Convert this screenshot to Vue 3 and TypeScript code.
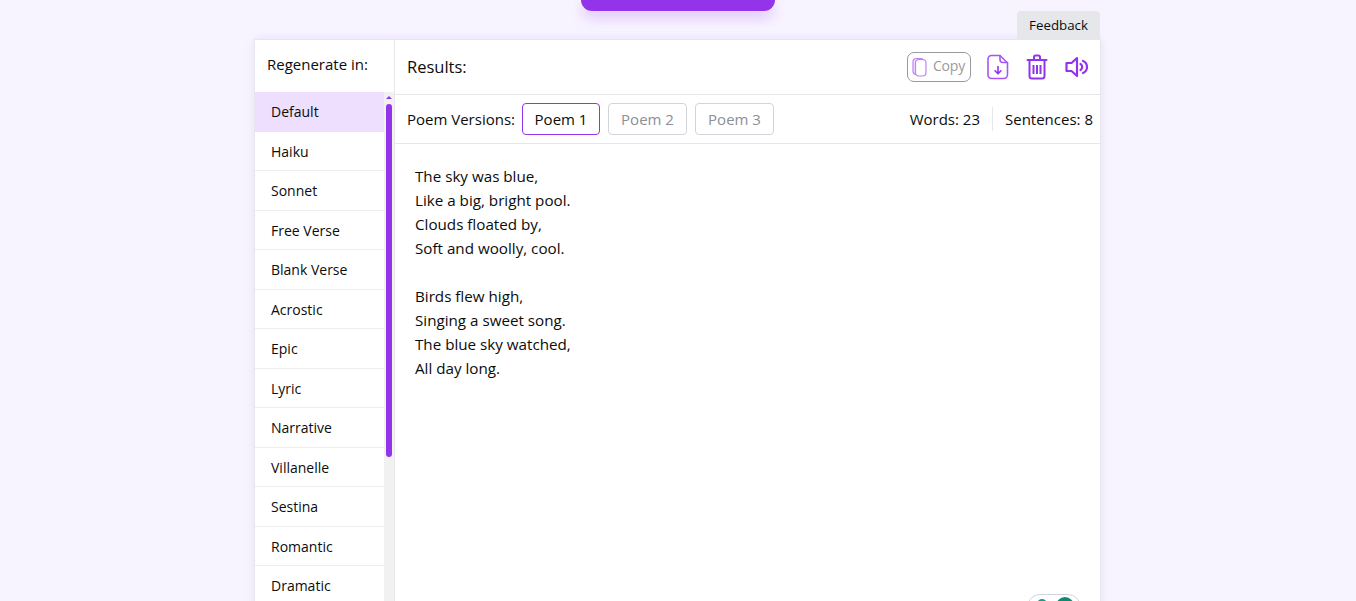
<script setup lang="ts">
const styles: string[] = ['Default','Haiku','Sonnet','Free Verse','Blank Verse','Acrostic','Epic','Lyric','Narrative','Villanelle','Sestina','Romantic','Dramatic']
const versions: string[] = ['Poem 1','Poem 2','Poem 3']
const stanzas: string[][] = [
  ['The sky was blue,','Like a big, bright pool.','Clouds floated by,','Soft and woolly, cool.'],
  ['Birds flew high,','Singing a sweet song.','The blue sky watched,','All day long.']
]
</script>

<template>
  <div class="page">
    <div class="top-button"></div>
    <div class="wrap">
      <div class="feedback-row"><button class="feedback">Feedback</button></div>
      <div class="card">
        <aside class="side">
          <div class="side-head">Regenerate in:</div>
          <div class="side-body">
            <ul class="list">
              <li v-for="(s, i) in styles" :key="s" :class="{ active: i === 0 }">{{ s }}</li>
            </ul>
            <div class="gutter">
              <span class="arrow"></span>
              <span class="thumb"></span>
            </div>
          </div>
        </aside>
        <main class="main">
          <div class="main-head">
            <span class="results">Results:</span>
            <div class="tools">
              <button class="copy">
                <svg width="17" height="20" viewBox="0 0 17 20" fill="none" stroke="#9333ea" stroke-width="1.2" opacity=".6">
                  <rect x="1" y="1.500" width="11" height="16" rx="3.500" fill="#e9d5ff"/>
                  <rect x="3.500" y="2.500" width="10.500" height="16.500" rx="3.500" fill="#fff"/>
                </svg>
                <span class="copy-label">Copy</span>
              </button>
              <svg class="ic-doc" width="22" height="26" viewBox="0 0 22 26" fill="none" stroke="#a855f7" stroke-width="1.6" stroke-linecap="round" stroke-linejoin="round">
                <path d="M4.500 1.500h8.500l7.500 7.500v11.500a4 4 0 0 1-4 4h-12a3.500 3.500 0 0 1-3.500-3.500v-16a3.500 3.500 0 0 1 3.500-3.500z"/>
                <path d="M13 1.500v4a3 3 0 0 0 3 3h4.500"/>
                <path d="M11 12.500v7M8 16.800l3 3 3-3" stroke="#9333ea"/>
              </svg>
              <svg class="ic-trash" width="22" height="26" viewBox="0 0 22 26" fill="none" stroke="#9333ea" stroke-width="2" stroke-linecap="round" stroke-linejoin="round">
                <path d="M1.500 6h19M8 5.500V3a1.500 1.500 0 0 1 1.500-1.500h3A1.500 1.500 0 0 1 14 3v2.500"/>
                <path d="M3.500 6.500v15.500a2.500 2.500 0 0 0 2.500 2.500h10a2.500 2.500 0 0 0 2.500-2.500V6.500"/>
                <path d="M7.500 11v9M11 11v9M14.500 11v9" stroke-linecap="butt"/>
              </svg>
              <svg class="ic-sound" width="24" height="22" viewBox="0 0 24 22" fill="none" stroke="#9333ea" stroke-width="2.200" stroke-linecap="round" stroke-linejoin="round">
                <path d="M12 2 6.500 7H1.500v8h5L12 20z"/>
                <path d="M15.500 8a3.500 3.500 0 0 1 0 6"/>
                <path d="M18 5a6.500 6.500 0 0 1 0 12"/>
              </svg>
            </div>
          </div>
          <div class="versions">
            <span class="v-label">Poem Versions:</span>
            <button v-for="(v, i) in versions" :key="v" class="v-btn" :class="{ on: i === 0 }">{{ v }}</button>
            <div class="counts">
              <span class="count first">Words: 23</span>
              <span class="count">Sentences: 8</span>
            </div>
          </div>
          <div class="poem">
            <p v-for="(st, i) in stanzas" :key="i">
              <span v-for="line in st" :key="line" class="line">{{ line }}</span>
            </p>
          </div>
          <div class="toggle"><span class="dot small"></span><span class="dot"></span></div>
        </main>
      </div>
    </div>
  </div>
</template>

<style scoped>
.page {
  height: 601px;
  overflow: hidden;
  background: #f8f4ff;
  font-family: "Open Sans", "Noto Sans", sans-serif;
  color: #0c0c0c;
  position: relative;
}
.top-button {
  width: 194px;
  height: 11px;
  margin: 0 auto;
  background: #9333ea;
  border-radius: 0 0 22px 22px;
  box-shadow: 0 6px 14px rgba(147, 51, 234, .28);
}
.wrap {
  width: 847px;
  margin-left: 254px;
}
.feedback-row {
  display: flex;
  justify-content: flex-end;
  padding-right: 1px;
}
.feedback {
  width: 83px;
  height: 28px;
  border: 0;
  background: #e5e7eb;
  border-radius: 4px 4px 0 0;
  font: 13.300px "Open Sans", sans-serif;
  color: #0c0c0c;
  padding: 0;
}
.card {
  display: flex;
  height: 580px;
  background: #fff;
  border: 1px solid #e5e7eb;
  box-shadow: 0 0 10px rgba(110, 80, 190, .12);
  box-sizing: border-box;
}
.side {
  width: 140px;
  flex: none;
  border-right: 1px solid #e5e7eb;
  box-sizing: border-box;
}
.side-head {
  height: 52px;
  padding: 13px 0 0 12px;
  box-sizing: border-box;
  font-size: 15px;
  line-height: 22px;
}
.side-body {
  display: flex;
  height: 530px;
  overflow: hidden;
}
.list {
  list-style: none;
  margin: 0;
  padding: 0;
  width: 129px;
  flex: none;
}
.list li {
  height: 39.500px;
  box-sizing: border-box;
  padding: 10px 0 0 16px;
  line-height: 19px;
  font-size: 14px;
  border-bottom: 1px solid #eeeef0;
}
.list li.active {
  background: #eddffd;
  border-bottom: 0;
}
.gutter {
  width: 10px;
  background: #f1f1f1;
  display: flex;
  flex-direction: column;
  align-items: center;
}
.arrow {
  margin-top: 4px;
  width: 0;
  height: 0;
  border-left: 3px solid transparent;
  border-right: 3px solid transparent;
  border-bottom: 3px solid #9333ea;
}
.thumb {
  margin-top: 5px;
  width: 6px;
  height: 353px;
  background: #9333ea;
  border-radius: 3px;
}
.main {
  flex: 1;
  min-width: 0;
  position: relative;
}
.main-head {
  height: 55px;
  box-sizing: border-box;
  border-bottom: 1px solid #e5e7eb;
  display: flex;
  align-items: center;
  justify-content: space-between;
  padding: 0 11px 0 12px;
}
.results {
  font-size: 16.500px;
  margin-top: -1px;
}
.tools {
  display: flex;
  align-items: center;
}
.copy {
  width: 64px;
  height: 30px;
  border: 1px solid #9a9a9a;
  border-radius: 7px;
  background: #fff;
  display: flex;
  align-items: center;
  gap: 4px;
  padding: 0 0 0 4px;
  font: 14px "Open Sans", sans-serif;
  letter-spacing: -.2px;
  color: #9a9a9a;
}
.copy-label {
  margin-top: -3px;
}
.ic-doc { margin-left: 16px; }
.ic-trash, .ic-sound { margin-left: 17px; }
.versions {
  height: 49px;
  box-sizing: border-box;
  border-bottom: 1px solid #e5e7eb;
  display: flex;
  align-items: center;
  padding: 0 7px 0 12px;
  font-size: 15px;
}
.v-label { margin-right: 7px; }
.v-btn {
  width: 79px;
  height: 32px;
  margin-right: 8px;
  background: #fff;
  border: 1px solid #d1d5db;
  border-radius: 4px;
  color: #8a8f98;
  font: 15px "Open Sans", sans-serif;
  padding: 0;
}
.v-btn.on {
  width: 78px;
  border-color: #9333ea;
  color: #0c0c0c;
}
.counts {
  margin-left: auto;
  display: flex;
  align-items: center;
  line-height: 24px;
}
.count.first {
  padding-right: 12px;
  margin-right: 12px;
  border-right: 1px solid #e5e7eb;
}
.poem {
  padding: 20px 20px 0;
  font-size: 15.200px;
  line-height: 24px;
}
.poem p {
  margin: 0 0 24px;
}
.line {
  display: block;
}
.toggle {
  position: absolute;
  left: 632px;
  top: 554px;
  width: 54px;
  height: 26px;
  border: 1px solid #d1d5db;
  border-radius: 13px;
  background: #fff;
  box-sizing: border-box;
  display: flex;
  align-items: flex-start;
  gap: 9px;
  padding: 2px 0 0 9px;
}
.dot {
  width: 18px;
  height: 18px;
  border-radius: 50%;
  background: #0f8a72;
}
.dot.small {
  width: 10px;
  height: 10px;
  margin-top: 2px;
  background: #14a085;
}
</style>

<style>
html, body { margin: 0; overflow: hidden; }
</style>
